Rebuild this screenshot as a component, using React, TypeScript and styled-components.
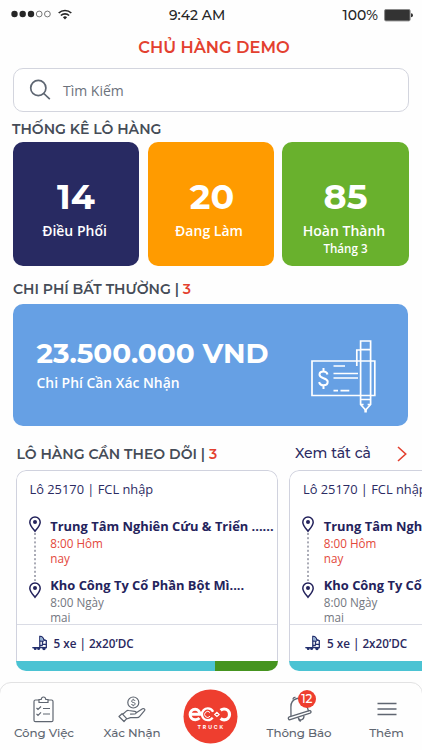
import React from 'react';
import styled, { createGlobalStyle } from 'styled-components';

const display = '"Montserrat", "Inter", sans-serif';
const body = '"Open Sans", "Noto Sans", sans-serif';

const GlobalStyle = createGlobalStyle`
  * { box-sizing: border-box; }
  body { margin: 0; background: #fefefe; overflow: hidden; }
`;

const Screen = styled.main`
  display: flex;
  flex-direction: column;
  width: 422px;
  height: 750px;
  overflow: hidden;
  background: #fefefe;
  font-family: ${body};
  white-space: nowrap;
`;

const StatusBar = styled.header`
  display: grid;
  grid-template-columns: 169px 1fr auto auto;
  align-items: center;
  height: 30px;
  padding-right: 9px;
  font: 500 13.9px/30px ${display};
  color: #262626;
`;
const Signal = styled.div`
  display: flex;
  align-items: center;
  gap: 7.5px;
  padding: 0 0 2px 10.5px;
`;
const Battery = styled.svg`
  margin-left: 6px;
`;

const Title = styled.h1`
  margin: 0;
  padding-left: 6px;
  height: 34px;
  font: 600 16.3px/34px ${display};
  color: #e3402f;
  text-align: center;
`;

const Search = styled.label`
  display: flex;
  align-items: center;
  gap: 12px;
  height: 43.5px;
  margin: 4px 13px 0;
  padding: 2px 0 0 15px;
  border: 1.4px solid #d3d5de;
  border-radius: 10px;
  background: #fff;
  font-size: 14px;
  color: #6c727c;
`;
const SearchIcon = styled.svg`
  margin-top: -2px;
`;

const Heading = styled.h2<{ $height: number; $top: number; $left: number }>`
  display: flex;
  justify-content: space-between;
  align-items: center;
  margin: 0;
  height: ${p => p.$height}px;
  padding: ${p => p.$top}px 15px 0 ${p => p.$left}px;
  font: 600 14.05px/20px ${display};
  color: #454c57;
`;
const Count = styled.span`
  color: #e3402f;
`;
const SeeAll = styled.a`
  display: flex;
  align-items: center;
  gap: 26px;
  font: 500 14px/20px ${display};
  color: #2c2b63;
`;
const SeeAllText = styled.span`
  margin-top: -2px;
`;

const Stats = styled.section`
  display: grid;
  grid-template-columns: 126px 126px 127px;
  gap: 8.5px;
  padding-left: 13px;
`;
const StatCard = styled.article<{ $color: string }>`
  height: 124px;
  padding-top: 35px;
  border-radius: 10px;
  background: ${p => p.$color};
  color: #fff;
  text-align: center;
`;
const StatValue = styled.div<{ $shift?: number }>`
  padding-left: ${p => p.$shift ?? 0}px;
  font: 700 35px/40px ${display};
`;
const StatLabel = styled.div`
  margin-top: 3.6px;
  padding-right: 3px;
  font: 600 14px/20px ${body};
`;
const StatNote = styled.div`
  font: 600 11.6px/16px ${body};
`;

const CostCard = styled.section`
  display: flex;
  justify-content: space-between;
  width: 395px;
  height: 122px;
  margin-left: 13px;
  padding: 32px 31px 0 23.5px;
  border-radius: 10px;
  background: #66a0e4;
  color: #fff;
`;
const CostValue = styled.div`
  font: 700 27.9px/34px ${display};
`;
const CostLabel = styled.div`
  margin-top: 2.5px;
  font: 600 13.9px/20px ${body};
`;
const CostIcon = styled.svg`
  margin-top: 4px;
`;

const Shipments = styled.section`
  display: flex;
  gap: 11.5px;
  padding-left: 15.5px;
  overflow: hidden;
`;
const Shipment = styled.article`
  flex: none;
  width: 262px;
  height: 201px;
  border-radius: 10px;
  overflow: hidden;
`;
const ShipmentBody = styled.div`
  height: 191.5px;
  padding-top: 8.7px;
  border: 1.4px solid #d0d2de;
  border-bottom: 0;
  border-radius: 10px 10px 0 0;
  background: #fff;
`;
const ShipmentTitle = styled.div`
  padding-left: 13px;
  font-size: 12.85px;
  line-height: 20px;
  color: #2c2b63;
`;
const Route = styled.div`
  display: flex;
  height: 125.5px;
  padding: 17.3px 0 0 12.4px;
  border-bottom: 1.2px solid #dadce5;
`;
const Stops = styled.div`
  display: grid;
  grid-template-rows: 59px 49px;
  margin: 1px 0 0 9.4px;
`;
const StopName = styled.div`
  font-size: 12.9px;
  font-weight: 700;
  line-height: 18px;
  color: #24235c;
`;
const StopTime = styled.div<{ $late?: boolean }>`
  width: 56px;
  padding-top: 0.5px;
  font-size: 11.7px;
  line-height: 15.4px;
  white-space: normal;
  color: ${p => (p.$late ? '#e3483b' : '#74777f')};
`;
const Vehicles = styled.div`
  display: flex;
  align-items: center;
  gap: 6px;
  height: 36px;
  padding-left: 15px;
  font-size: 11.7px;
  font-weight: 600;
  color: #2a2960;
`;
const Progress = styled.div<{ $done: number }>`
  height: 9.5px;
  background: linear-gradient(90deg, #4bc3d3 ${p => p.$done}%, #45941f ${p => p.$done}%);
`;

const Nav = styled.nav`
  display: grid;
  flex: none;
  grid-template-columns: 88px 88px 69px 108px 67px;
  width: 424px;
  height: 80px;
  margin: 11.5px -1px -13px;
  border: 1.3px solid #e2e2e3;
  border-radius: 12px;
`;
const NavItem = styled.a`
  display: flex;
  flex-direction: column;
  align-items: center;
  padding-top: 11px;
  font: 500 11.9px/18px ${display};
  letter-spacing: -0.1px;
  color: #5f6671;
`;
const IconSlot = styled.span`
  position: relative;
  display: grid;
  place-items: center;
  height: 30px;
`;
const Badge = styled.b`
  position: absolute;
  top: -4px;
  left: 11px;
  width: 18.4px;
  height: 18.4px;
  border-radius: 50%;
  background: #ee3e2f;
  color: #fff;
  font: 500 12px/18px ${display};
  text-align: center;
`;
const Logo = styled.svg`
  align-self: start;
  justify-self: center;
  margin-top: 6px;
`;

const Pin = ({ y }: { y: number }) => (
  <g transform={`translate(0 ${y})`}>
    <path d="M6 15.3C3.600 12.200.8 9.300.8 6.200a5.200 5.200 0 0 1 10.400 0c0 3.100-2.800 6-5.200 9.100Z" fill="none" stroke="#24235c" strokeWidth="1.500" />
    <circle cx="6" cy="6" r="2" fill="#24235c" />
  </g>
);

const RouteLine = () => (
  <svg width="12" height="84" viewBox="0 0 12 84">
    <Pin y={0} />
    <path d="M6 17V65" stroke="#55576c" strokeWidth="1" strokeDasharray="2 2.200" />
    <Pin y={66} />
  </svg>
);

const Truck = () => (
  <svg width="16" height="16" viewBox="0 0 16 16" fill="none" stroke="#24306e" strokeWidth="1.300">
    <path d="M.3 12.600H14.300V5.700L12 4.800" />
    <path d="M7.800 12V1.400c1.800-.3 3.200.7 4.200 3.600l2.300.7" />
    <path d="M7.800 6h4M10.500 6v3.300h3.800M7.800 10.500h3" />
    <path d="M8.400 2v3.500h2.800C10.600 3.500 9.600 2.200 8.400 2Z" fill="#8db0d4" stroke="none" />
    <g fill="#24306e" stroke="none"><circle cx="3.200" cy="13.600" r="1.500" /><circle cx="6.600" cy="13.600" r="1.500" /><circle cx="12" cy="13.500" r="1.700" /></g>
  </svg>
);

const ShipmentCard = ({ done }: { done: number }) => (
  <Shipment>
    <ShipmentBody>
      <ShipmentTitle>Lô 25170 | FCL nhập</ShipmentTitle>
      <Route>
        <RouteLine />
        <Stops>
          <div>
            <StopName>Trung Tâm Nghiên Cứu &amp; Triển ......</StopName>
            <StopTime $late>8:00 Hôm nay</StopTime>
          </div>
          <div>
            <StopName>Kho Công Ty Cổ Phần Bột Mì....</StopName>
            <StopTime>8:00 Ngày mai</StopTime>
          </div>
        </Stops>
      </Route>
      <Vehicles><Truck />5 xe | 2x20’DC</Vehicles>
    </ShipmentBody>
    <Progress $done={done} />
  </Shipment>
);

export default function App() {
  return (
    <Screen>
      <GlobalStyle />
      <StatusBar>
        <Signal>
          <svg width="40" height="8" viewBox="0 0 40 8" fill="#262626">
            <circle cx="3.500" cy="4" r="3.200" /><circle cx="11.700" cy="4" r="3.200" /><circle cx="20" cy="4" r="3.200" />
            <g fill="none" stroke="#555" strokeWidth=".8"><circle cx="28.200" cy="4" r="2.900" /><circle cx="36.400" cy="4" r="2.900" /></g>
          </svg>
          <svg width="14" height="11" viewBox="0 0 14 11" fill="none" stroke="#262626" strokeWidth="1.7">
            <path d="M.7 4a9.200 9.200 0 0 1 12.600 0M2.900 6.500a6 6 0 0 1 8.200 0" />
            <path d="M7 10.500 4.900 8.300a3 3 0 0 1 4.200 0Z" fill="#262626" stroke="none" />
          </svg>
        </Signal>
        <span>9:42 AM</span>
        <span>100%</span>
        <Battery width="29" height="13" viewBox="0 0 29 13">
          <rect x=".6" y=".5" width="25.500" height="11.400" rx="1.300" fill="#333" stroke="#8b8b8b" strokeWidth="1" />
          <path d="M27 4.200a2 2 0 0 1 0 4Z" fill="#333" />
        </Battery>
      </StatusBar>
      <Title>CHỦ HÀNG DEMO</Title>
      <Search>
        <SearchIcon width="22" height="22" viewBox="0 0 22 22" fill="none" stroke="#5e6672" strokeWidth="1.7">
          <circle cx="9.300" cy="9" r="7.600" /><path d="m14.800 14.500 6 5.700" />
        </SearchIcon>
        Tìm Kiếm
      </Search>

      <Heading $height={30.5} $top={5} $left={12}>THỐNG KÊ LÔ HÀNG</Heading>
      <Stats>
        <StatCard $color="#282a62"><StatValue>14</StatValue><StatLabel>Điều Phối</StatLabel></StatCard>
        <StatCard $color="#ff9b00"><StatValue $shift={3}>20</StatValue><StatLabel>Đang Làm</StatLabel></StatCard>
        <StatCard $color="#69b12d"><StatValue>85</StatValue><StatLabel>Hoàn Thành</StatLabel><StatNote>Tháng 3</StatNote></StatCard>
      </Stats>

      <Heading $height={38} $top={8} $left={13}><span>CHI PHÍ BẤT THƯỜNG | <Count>3</Count></span></Heading>
      <CostCard>
        <div>
          <CostValue>23.500.000 VND</CostValue>
          <CostLabel>Chi Phí Cần Xác Nhận</CostLabel>
        </div>
        <CostIcon width="67" height="74" viewBox="0 0 67 74" fill="none" stroke="#fff" strokeWidth="1.700">
          <path d="M46.500 21H2v34.500h48.500M60.500 21h4.300v34.500h-4.300" />
          <path d="M46.600 21h14M50.600 55.500h10" />
          <path d="M50.600 1h10v63.500l-5 5.500-5-5.500ZM50.600 9.700h10M50.600 59.500h10M50.600 64.500h3M57.600 64.500h3M50.600 10H46.800V26" />
          <path d="M55.600 69v3.500" strokeWidth="2.500" />
          <path d="M23.500 26H35M23.500 33.500h24.500M23.500 38h24.500M23.500 50.700h4.500M30.500 50.700h8.800" />
          <path d="M17.500 34.500c-.5-2-2-2.900-4-2.900-2.400 0-4 1.200-4 3.200 0 4.400 8.200 2.400 8.200 7 0 2.200-1.800 3.500-4.200 3.500-2.300 0-4-1.100-4.300-3.300M13.500 28v3.600M13.500 45.300V49" strokeWidth="2" />
        </CostIcon>
      </CostCard>

      <Heading $height={43.5} $top={13} $left={16.500}>
        <span>LÔ HÀNG CẦN THEO DÕI | <Count>3</Count></span>
        <SeeAll>
          <SeeAllText>Xem tất cả</SeeAllText>
          <svg width="10" height="16" viewBox="0 0 10 16" fill="none" stroke="#e3402f" strokeWidth="1.600"><path d="m1 1 7.700 7L1 15" /></svg>
        </SeeAll>
      </Heading>
      <Shipments>
        <ShipmentCard done={75.8} />
        <ShipmentCard done={75.8} />
      </Shipments>

      <Nav>
        <NavItem>
          <IconSlot>
            <svg width="22" height="27" viewBox="0 0 22 27" fill="none" stroke="#5f6671" strokeWidth="1.200">
              <path d="M6 4H2.500C1.500 4 1 4.600 1 5.500v18.700c0 1 .5 1.500 1.500 1.500h16c1 0 1.500-.5 1.500-1.500V5.500C20 4.600 19.500 4 18.500 4H15" />
              <path d="M6 6.500V3.500h2.200c.2-1.700 1-2.500 2.300-2.500s2.100.8 2.300 2.500H15v3Z" />
              <path d="m3.500 12 1.500 1.500L8 10.500M3.500 17.800 5 19.300l3-3M10 12.500h7M10 18h7" />
            </svg>
          </IconSlot>
          Công Việc
        </NavItem>
        <NavItem>
          <IconSlot>
            <svg width="28" height="27" viewBox="0 0 28 27" fill="none" stroke="#5f6671" strokeWidth="1.200" strokeLinejoin="round">
              <circle cx="15.300" cy="6.500" r="5.500" />
              <path d="M17.200 5c-.3-.8-1-1.100-1.900-1.100-1 0-1.800.5-1.800 1.300 0 1.700 3.700.8 3.700 2.600 0 .9-.8 1.400-1.900 1.400-1 0-1.700-.4-1.900-1.200M15.300 2.800v1M15.300 9.200v1" strokeWidth="1" />
              <path d="m1 20.500 3-2.800 4.700 4.900L6 25.500ZM4.500 18.500l3.800-3.400c.7-.6 1.500-.8 2.300-.6l6.200.9c2 .3 1.700 2.500 0 2.600l-4.700.2M17.500 17.300l7-4.500c1.400-.8 3 .5 2 1.900l-4.800 5.600c-.8 1-1.700 1.300-2.700 1.300h-6.500L8.500 23" />
            </svg>
          </IconSlot>
          Xác Nhận
        </NavItem>
        <Logo width="55" height="55" viewBox="0 0 55 55">
          <circle cx="27.500" cy="27.500" r="27" fill="#ee3e2f" />
          <g fill="none" stroke="#fff">
            <path d="M7.500 25.300h9.300c0-3-1.900-5-4.700-5-2.900 0-5 2.100-5 5.200 0 3.100 2.100 5.200 5.200 5.200 1.700 0 3.100-.6 4.200-1.700" strokeWidth="3" />
            <circle cx="24.800" cy="25.300" r="5.900" strokeWidth="2.300" strokeDasharray="30 7.070" strokeDashoffset="-3.500" />
            <path d="M27 23.600a3 3 0 1 0 0 3.600" strokeWidth="1" />
            <path d="m31.700 25.400 2.200-2 2.200 2-2.200 2Z" strokeWidth="1.200" />
            <path d="M37.600 21.300c1.100-.9 2.200-1.300 3.500-1.300 3 0 5.400 2.300 5.400 5.400s-2.400 5.400-5.400 5.400c-1.300 0-2.400-.4-3.500-1.300" strokeWidth="3.200" />
          </g>
          <text x="14.500" y="40" fill="#fff" fontFamily="Inter, sans-serif" fontWeight="700" fontSize="5.200" letterSpacing="1.900">TRUCK</text>
        </Logo>
        <NavItem>
          <IconSlot>
            <svg width="25" height="27" viewBox="0 0 25 27" fill="none" stroke="#5f6671" strokeWidth="1.300" strokeLinejoin="round">
              <path d="m4 20-.1-9C3.800 6.500 6.500 3.400 10 2.500c4-.9 7.500 1 9 5l2.600 7.700" />
              <path d="M6 3.500C6 2 7 1.200 8.500 1.500" />
              <path d="m2.300 20.800 20-6.200c1.700-.4 2.400 2 .8 2.600L3.200 23.700c-1.800.5-2.600-2.200-.9-2.900Z" />
              <path d="M11.300 21.500c.8 3.800 5.800 3 5.700-1.700M11.300 22c.3 1.500 1 2.800 2.500 3.300" />
            </svg>
            <Badge>12</Badge>
          </IconSlot>
          Thông Báo
        </NavItem>
        <NavItem>
          <IconSlot>
            <svg width="20" height="14" viewBox="0 0 20 14" stroke="#5f6671" strokeWidth="1.500"><path d="M.5 1.500h19M.5 7h19M.5 12.500h19" /></svg>
          </IconSlot>
          Thêm
        </NavItem>
      </Nav>
    </Screen>
  );
}
